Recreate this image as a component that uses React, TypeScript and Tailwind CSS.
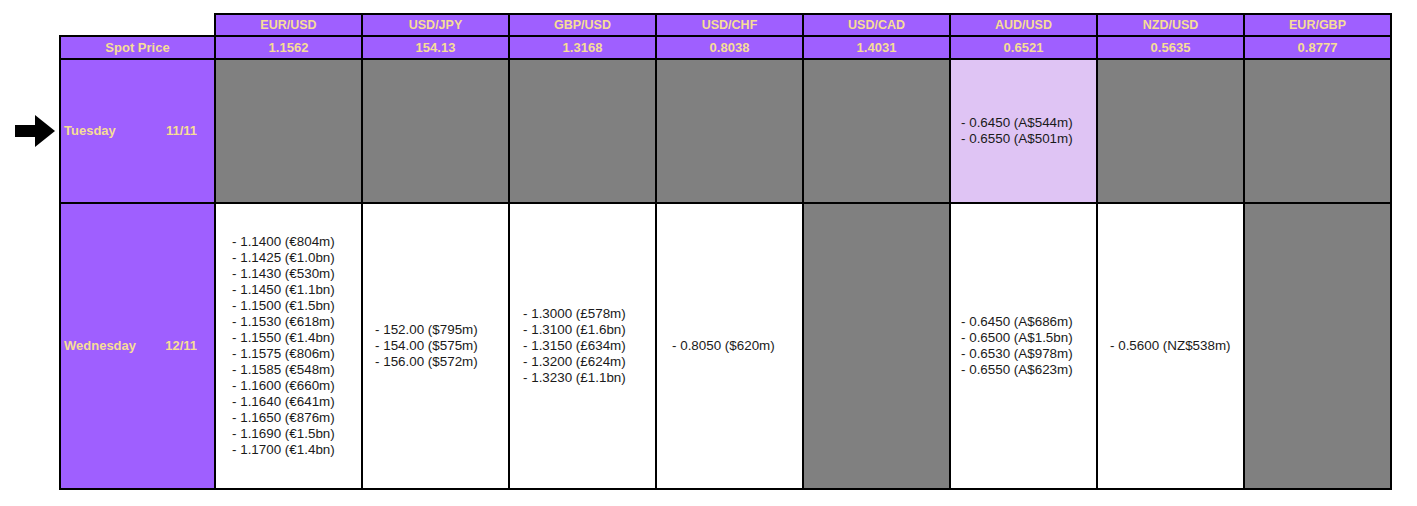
import React from 'react';

type Cell = { kind: 'gray' } | { kind: 'data'; lines: string[]; bg?: string; pad: string };

const pairs = [
  { name: 'EUR/USD', spot: '1.1562' },
  { name: 'USD/JPY', spot: '154.13' },
  { name: 'GBP/USD', spot: '1.3168' },
  { name: 'USD/CHF', spot: '0.8038' },
  { name: 'USD/CAD', spot: '1.4031' },
  { name: 'AUD/USD', spot: '0.6521' },
  { name: 'NZD/USD', spot: '0.5635' },
  { name: 'EUR/GBP', spot: '0.8777' },
];

const tuesday: Cell[] = [
  { kind: 'gray' },
  { kind: 'gray' },
  { kind: 'gray' },
  { kind: 'gray' },
  { kind: 'gray' },
  { kind: 'data', lines: ['- 0.6450 (A$544m)', '- 0.6550 (A$501m)'], bg: 'bg-[#dfc4f4]', pad: 'pl-[10px]' },
  { kind: 'gray' },
  { kind: 'gray' },
];

const wednesday: Cell[] = [
  {
    kind: 'data',
    pad: 'pl-[16px]',
    lines: [
      '- 1.1400 (€804m)',
      '- 1.1425 (€1.0bn)',
      '- 1.1430 (€530m)',
      '- 1.1450 (€1.1bn)',
      '- 1.1500 (€1.5bn)',
      '- 1.1530 (€618m)',
      '- 1.1550 (€1.4bn)',
      '- 1.1575 (€806m)',
      '- 1.1585 (€548m)',
      '- 1.1600 (€660m)',
      '- 1.1640 (€641m)',
      '- 1.1650 (€876m)',
      '- 1.1690 (€1.5bn)',
      '- 1.1700 (€1.4bn)',
    ],
  },
  { kind: 'data', pad: 'pl-[12px]', lines: ['- 152.00 ($795m)', '- 154.00 ($575m)', '- 156.00 ($572m)'] },
  {
    kind: 'data',
    pad: 'pl-[13px]',
    lines: ['- 1.3000 (£578m)', '- 1.3100 (£1.6bn)', '- 1.3150 (£634m)', '- 1.3200 (£624m)', '- 1.3230 (£1.1bn)'],
  },
  { kind: 'data', pad: 'pl-[15px]', lines: ['- 0.8050 ($620m)'] },
  { kind: 'gray' },
  {
    kind: 'data',
    pad: 'pl-[10px]',
    lines: ['- 0.6450 (A$686m)', '- 0.6500 (A$1.5bn)', '- 0.6530 (A$978m)', '- 0.6550 (A$623m)'],
  },
  { kind: 'data', pad: 'pl-[12px]', lines: ['- 0.5600 (NZ$538m)'] },
  { kind: 'gray' },
];

const Arrow = () => (
  <svg width="42" height="34" viewBox="0 0 42 34" className="absolute left-[-47px] top-1/2 -translate-y-1/2">
    <path d="M1 11 H21 V1 L41 17 L21 33 V23 H1 Z" fill="#000" />
  </svg>
);

const DataCell = ({ cell }: { cell: Cell }) => {
  if (cell.kind === 'gray') {
    return <td className="border-2 border-black bg-[#808080]"></td>;
  }
  return (
    <td className={`border-2 border-black align-middle ${cell.bg ?? 'bg-white'} ${cell.pad}`}>
      {cell.lines.map((l) => (
        <div key={l} className="text-[13.4px] leading-[16px] text-[#1a1a1a] whitespace-nowrap">
          {l}
        </div>
      ))}
    </td>
  );
};

const DayCell = ({ day, date, arrow }: { day: string; date: string; arrow?: boolean }) => (
  <td className="relative border-2 border-black bg-[#9f5fff] px-[3px] align-middle">
    {arrow && <Arrow />}
    <div className="flex items-center justify-between pr-[14px] text-[13px] font-bold text-[#f6dd96]">
      <span>{day}</span>
      <span>{date}</span>
    </div>
  </td>
);

export default function App() {
  return (
    <div
      className="min-h-[506px] bg-white pl-[59px] pt-[13px]"
      style={{ fontFamily: '"Liberation Sans", Arial, sans-serif' }}
    >
      <table className="table-fixed border-collapse">
        <colgroup>
          <col className="w-[155px]" />
          {pairs.map((p) => (
            <col key={p.name} className="w-[147px]" />
          ))}
        </colgroup>
        <tbody>
          <tr className="h-[22px]">
            <td className="border-0"></td>
            {pairs.map((p) => (
              <td
                key={p.name}
                className="border-2 border-black bg-[#9f5fff] text-center text-[12.5px] font-bold text-[#f6dd96]"
              >
                {p.name}
              </td>
            ))}
          </tr>
          <tr className="h-[23px]">
            <td className="border-2 border-black bg-[#9f5fff] text-center text-[13px] font-bold text-[#f6dd96]">
              Spot Price
            </td>
            {pairs.map((p) => (
              <td
                key={p.name}
                className="border-2 border-black bg-[#9f5fff] text-center text-[13px] font-bold text-[#f6dd96]"
              >
                {p.spot}
              </td>
            ))}
          </tr>
          <tr className="h-[144px]">
            <DayCell day="Tuesday" date="11/11" arrow />
            {tuesday.map((c, i) => (
              <DataCell key={i} cell={c} />
            ))}
          </tr>
          <tr className="h-[286px]">
            <DayCell day="Wednesday" date="12/11" />
            {wednesday.map((c, i) => (
              <DataCell key={i} cell={c} />
            ))}
          </tr>
        </tbody>
      </table>
    </div>
  );
}
